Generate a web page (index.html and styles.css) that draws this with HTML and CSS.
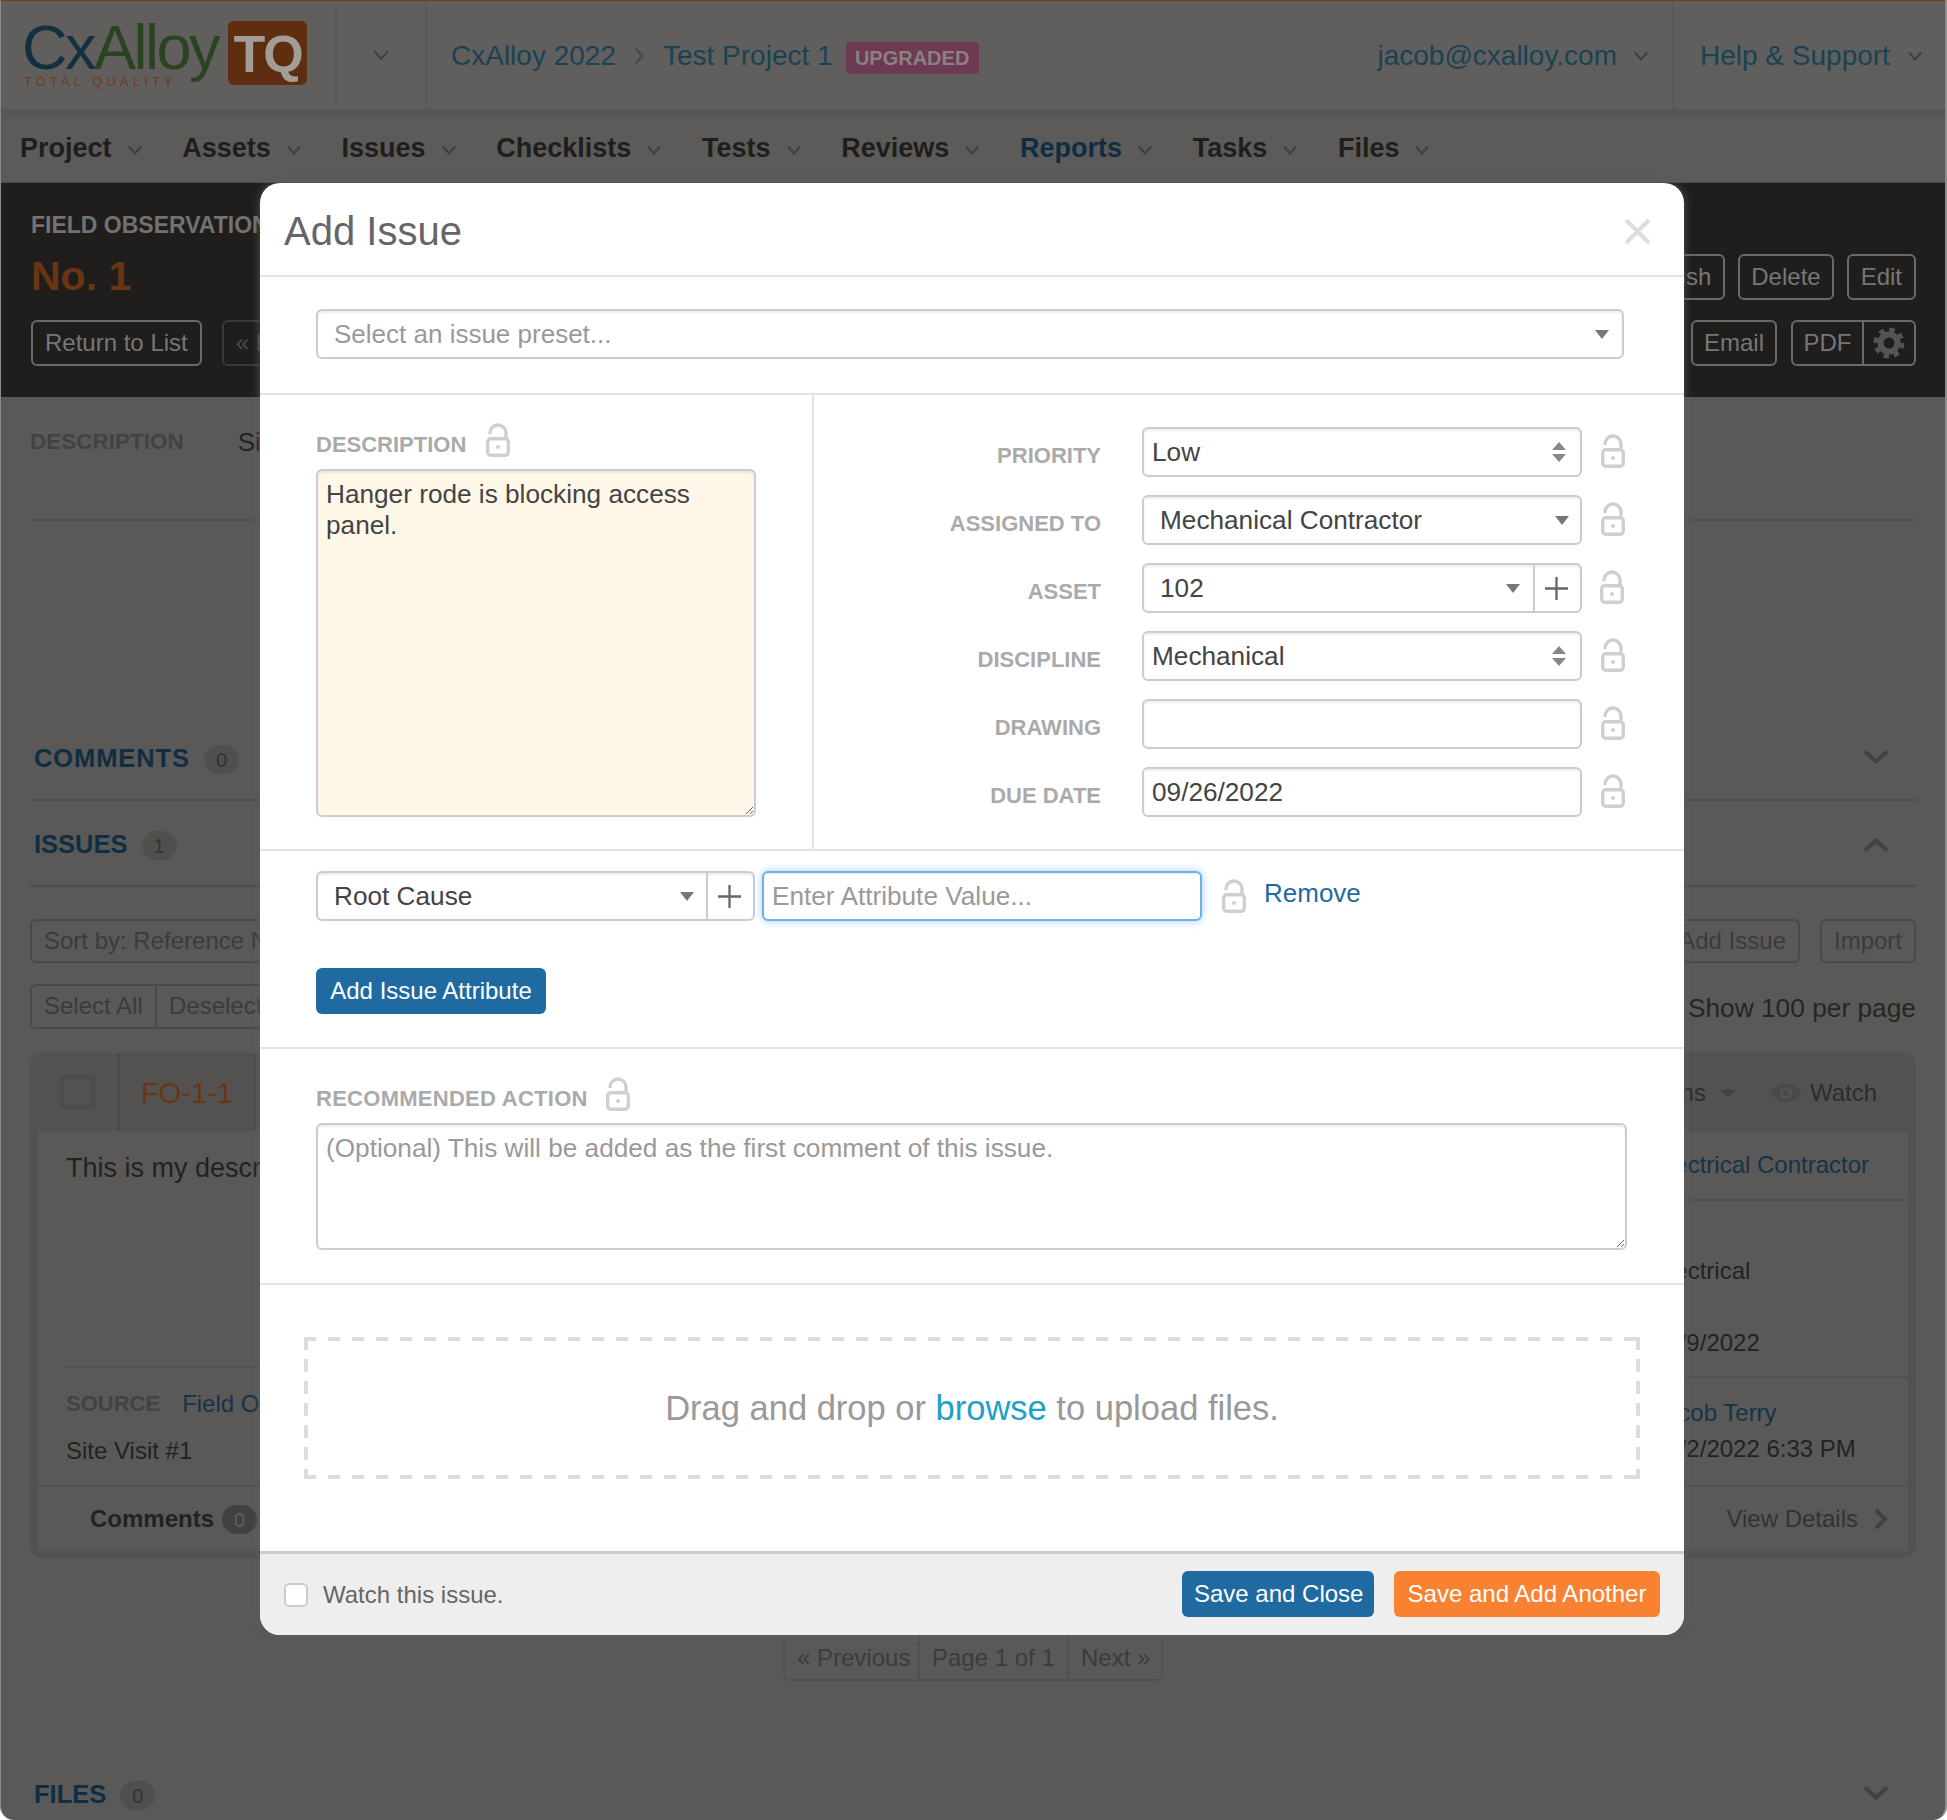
FILE: index.html
```html
<!DOCTYPE html>
<html lang="en">
<head>
<meta charset="utf-8">
<title>Add Issue</title>
<link rel="stylesheet" href="styles.css">
</head>
<body>
<svg class="defs" width="0" height="0" aria-hidden="true">
  <symbol id="lock" viewBox="0 0 24 34">
    <path d="M4 11V10a8 8 0 0 1 16 0v6" fill="none" stroke="currentColor" stroke-width="3.4"/>
    <rect x="1.7" y="15.7" width="20.6" height="16.6" rx="3" fill="none" stroke="currentColor" stroke-width="3.4"/>
    <circle cx="12" cy="24" r="2" fill="currentColor"/>
  </symbol>
  <symbol id="chev" viewBox="0 0 14 10">
    <path d="M1 1.5l6 7 6-7" fill="none" stroke="currentColor" stroke-width="2"/>
  </symbol>
  <symbol id="bigchev" viewBox="0 0 26 16">
    <path d="M2 2.5l11 10 11-10" fill="none" stroke="currentColor" stroke-width="4"/>
  </symbol>
  <symbol id="plus" viewBox="0 0 24 24">
    <path d="M12 0v24M0 12h24" fill="none" stroke="currentColor" stroke-width="2.4"/>
  </symbol>
</svg>
<div class="page">
  <header class="topbar">
    <div class="logo">
      <div class="logo-words">
        <div class="logo-name"><span class="logo-cx">Cx</span><span class="logo-alloy">Alloy</span></div>
        <div class="logo-tag">TOTAL QUALITY</div>
      </div>
      <div class="logo-tq">TQ</div>
    </div>
    <div class="switcher"><svg class="chev-lg"><use href="#chev"/></svg></div>
    <nav class="crumbs">
      <a class="link">CxAlloy 2022</a>
      <svg class="crumb-sep" viewBox="0 0 10 18"><path d="M1.5 1.5l7 7.5-7 7.5" fill="none" stroke="currentColor" stroke-width="2"/></svg>
      <a class="link">Test Project 1</a>
      <span class="badge-up">UPGRADED</span>
    </nav>
    <div class="user"><a class="link">jacob@cxalloy.com</a><svg class="chev"><use href="#chev"/></svg></div>
    <div class="help"><a class="link">Help &amp; Support</a><svg class="chev"><use href="#chev"/></svg></div>
  </header>
  <nav class="mainnav">
    <a class="navitem">Project<svg class="chev"><use href="#chev"/></svg></a>
    <a class="navitem">Assets<svg class="chev"><use href="#chev"/></svg></a>
    <a class="navitem">Issues<svg class="chev"><use href="#chev"/></svg></a>
    <a class="navitem">Checklists<svg class="chev"><use href="#chev"/></svg></a>
    <a class="navitem">Tests<svg class="chev"><use href="#chev"/></svg></a>
    <a class="navitem">Reviews<svg class="chev"><use href="#chev"/></svg></a>
    <a class="navitem navitem-active">Reports<svg class="chev"><use href="#chev"/></svg></a>
    <a class="navitem">Tasks<svg class="chev"><use href="#chev"/></svg></a>
    <a class="navitem">Files<svg class="chev"><use href="#chev"/></svg></a>
  </nav>
  <section class="titlebar">
    <div class="titlebar-row titlebar-top">
      <div>
        <div class="tb-kicker">FIELD OBSERVATIONS</div>
        <div class="tb-no">No. 1</div>
      </div>
      <div class="tb-btns tb-btns-top">
        <span class="tb-btn">Finish</span>
        <span class="tb-btn tb-btn-delete">Delete</span>
        <span class="tb-btn">Edit</span>
      </div>
    </div>
    <div class="titlebar-row">
      <div class="tb-btns">
        <span class="tb-btn">Return to List</span>
        <span class="tb-btn tb-btn-off">« Previous</span>
      </div>
      <div class="tb-btns">
        <span class="tb-btn tb-btn-email">Email</span>
        <span class="tb-group">
          <span class="tb-pdf">PDF</span>
          <span class="tb-gear"><svg viewBox="0 0 32 32" width="32" height="32"><circle cx="16" cy="16" r="8.5" fill="none" stroke="#555452" stroke-width="6"/><circle cx="16" cy="16" r="13" fill="none" stroke="#555452" stroke-width="5" stroke-dasharray="5.2 5"/></svg></span>
        </span>
      </div>
    </div>
  </section>
  <main class="content">
    <div class="desc-row">
      <span class="mini-label">DESCRIPTION</span>
      <span class="desc-val">Site observation</span>
    </div>
    <div class="sect sect-comments">
      <span class="sect-title sect-title-wide">COMMENTS</span><span class="pill">0</span>
      <svg class="bigchev"><use href="#bigchev"/></svg>
    </div>
    <div class="sect">
      <span class="sect-title">ISSUES</span><span class="pill">1</span>
      <svg class="bigchev bigchev-up"><use href="#bigchev"/></svg>
    </div>
    <div class="toolbar">
      <span class="bg-btn">Sort by: Reference Number</span>
      <div class="toolbar-right"><span class="bg-btn">Add Issue</span><span class="bg-btn">Import</span></div>
    </div>
    <div class="toolbar toolbar-2">
      <div class="bg-group"><span class="bg-btn">Select All</span><span class="bg-btn">Deselect All</span></div>
      <span class="show-per">Show 100 per page</span>
    </div>
    <article class="card">
      <div class="card-head">
        <div class="card-check"><span class="bg-check"></span></div>
        <div class="card-ref">FO-1-1</div>
        <div class="card-acts">
          <span class="card-act">Actions<i class="tri-dim"></i></span>
          <span class="card-watch">
            <svg viewBox="0 0 32 18" width="32" height="18"><path d="M0 9c4-5 10-9 16-9s12 4 16 9c-4 5-10 9-16 9S4 14 0 9z" fill="#4a4947"/><circle cx="16" cy="9" r="6" fill="#575654"/><circle cx="16" cy="9" r="3.4" fill="#4a4947"/></svg>
            Watch
          </span>
        </div>
      </div>
      <div class="card-body">
        <div class="card-main">
          <p class="card-text">This is my description of the issue.</p>
          <div class="card-meta">
            <div class="meta-line"><span class="meta-label">SOURCE</span><a class="bg-link">Field Observation No. 1</a></div>
            <div class="meta-val">Site Visit #1</div>
          </div>
        </div>
        <div class="card-side">
          <div class="side-a"><a class="bg-link">Electrical Contractor</a></div>
          <div class="side-b"><div>Electrical</div><div>09/9/2022</div></div>
          <div class="side-c"><a class="bg-link">Jacob Terry</a><div>09/2/2022 6:33 PM</div></div>
        </div>
      </div>
      <div class="card-foot">
        <span class="foot-comments">Comments<span class="pill pill-dark">0</span></span>
        <span class="foot-details">View Details<svg viewBox="0 0 14 22" width="14" height="22"><path d="M2 2l9 9-9 9" fill="none" stroke="#424140" stroke-width="4"/></svg></span>
      </div>
    </article>
    <div class="pager"><span>« Previous</span><span>Page 1 of 1</span><span>Next »</span></div>
    <div class="sect sect-files">
      <span class="sect-title">FILES</span><span class="pill">0</span>
      <svg class="bigchev"><use href="#bigchev"/></svg>
    </div>
  </main>

  <div class="modal" role="dialog" aria-label="Add Issue">
    <div class="m-head">
      <h1 class="m-title">Add Issue</h1>
      <svg class="m-close" viewBox="0 0 27 27" width="27" height="27"><path d="M2 2l23 23M25 2L2 25" fill="none" stroke="#ddd" stroke-width="4"/></svg>
    </div>
    <div class="m-preset">
      <div class="ctl ctl-preset"><span class="ph">Select an issue preset...</span><i class="tri"></i></div>
    </div>
    <div class="m-split">
      <div class="m-left">
        <div class="lab-line lab-line-desc"><span class="lab">DESCRIPTION</span><svg class="lock"><use href="#lock"/></svg></div>
        <textarea class="ta ta-desc">Hanger rode is blocking access panel.</textarea>
      </div>
      <div class="m-right">
        <span class="f-lab">PRIORITY</span>
        <div class="ctl ctl-native"><span>Low</span><i class="stepper"></i></div>
        <svg class="lock"><use href="#lock"/></svg>

        <span class="f-lab">ASSIGNED TO</span>
        <div class="ctl ctl-chosen"><span>Mechanical Contractor</span><i class="tri"></i></div>
        <svg class="lock"><use href="#lock"/></svg>

        <span class="f-lab">ASSET</span>
        <div class="ctl ctl-chosen ctl-add"><span>102</span><i class="tri"></i><b class="addon"><svg class="plus"><use href="#plus"/></svg></b></div>
        <svg class="lock lock-shift"><use href="#lock"/></svg>

        <span class="f-lab">DISCIPLINE</span>
        <div class="ctl ctl-native"><span>Mechanical</span><i class="stepper"></i></div>
        <svg class="lock"><use href="#lock"/></svg>

        <span class="f-lab">DRAWING</span>
        <input class="ctl ctl-input" type="text">
        <svg class="lock"><use href="#lock"/></svg>

        <span class="f-lab">DUE DATE</span>
        <input class="ctl ctl-input" type="text" value="09/26/2022">
        <svg class="lock"><use href="#lock"/></svg>
      </div>
    </div>
    <div class="m-attr">
      <div class="attr-row">
        <div class="ctl ctl-chosen ctl-add ctl-root"><span>Root Cause</span><i class="tri"></i><b class="addon"><svg class="plus"><use href="#plus"/></svg></b></div>
        <input class="ctl ctl-input ctl-focus" type="text" placeholder="Enter Attribute Value...">
        <svg class="lock"><use href="#lock"/></svg>
        <a class="remove">Remove</a>
      </div>
      <button class="btn btn-blue btn-attr" type="button">Add Issue Attribute</button>
    </div>
    <div class="m-rec">
      <div class="lab-line"><span class="lab lab-rec">RECOMMENDED ACTION</span><svg class="lock"><use href="#lock"/></svg></div>
      <textarea class="ta ta-rec" placeholder="(Optional) This will be added as the first comment of this issue."></textarea>
    </div>
    <div class="m-drop">
      <div class="dropzone">Drag and drop or&nbsp;<a class="browse">browse</a>&nbsp;to upload files.</div>
    </div>
    <div class="m-foot">
      <label class="watch"><input class="cb" type="checkbox"><span>Watch this issue.</span></label>
      <div class="m-foot-btns">
        <button class="btn btn-blue btn-close" type="button">Save and Close</button>
        <button class="btn btn-orange" type="button">Save and Add Another</button>
      </div>
    </div>
  </div>
</div>
</body>
</html>
```
FILE: styles.css
```css
* { box-sizing: border-box; }
html, body { margin: 0; padding: 0; background: #fff; }
body { font-family: "Liberation Sans", Arial, sans-serif; color: #222; }
.defs { position: absolute; }
a { text-decoration: none; }
.page {
  position: relative;
  width: 1947px;
  height: 1820px;
  overflow: hidden;
  background: #5a5958;
  border-radius: 0 0 14px 14px;
  border-left: 1px solid #8c8b8a;
  border-right: 2px solid #8c8b8a;
}
.chev { width: 14px; height: 10px; color: #3f3f3d; flex: none; }

/* top bar */
.topbar {
  height: 109px;
  display: flex;
  align-items: stretch;
  background: #605f5d;
  border-top: 1px solid #7a3a14;
}
.logo { width: 334px; padding: 13px 0 0 21px; display: flex; gap: 8px; align-items: flex-start; flex: none; }
.logo-words { width: 198px; }
.logo-name { font-size: 63px; line-height: 66px; letter-spacing: -2.5px; white-space: nowrap; }
.logo-cx { color: #12303f; }
.logo-alloy { color: #2a4320; }
.logo-tag { margin: -5px 0 0 2px; font-size: 12.5px; line-height: 14px; letter-spacing: 4.4px; color: #743815; white-space: nowrap; }
.logo-tq {
  width: 79px; height: 64px; margin-top: 7px; background: #5f2d10; border-radius: 6px;
  color: #a39d97; font-weight: 700; font-size: 52px; line-height: 66px; text-align: center; letter-spacing: -2px;
}
.switcher { width: 92px; flex: none; border-left: 2px solid #5a5957; border-right: 2px solid #5a5957; display: flex; align-items: center; justify-content: center; }
.chev-lg { width: 16px; height: 12px; color: #434241; }
.crumbs { display: flex; align-items: center; padding: 2px 0 0 24px; flex: 1; }
.link { font-size: 28px; color: #194254; white-space: nowrap; }
.crumb-sep { width: 10px; height: 18px; margin: 0 19px 0 18px; color: #4b4a48; }
.badge-up {
  margin: 3px 0 0 13px; width: 133px; height: 32px; background: #6e3a52; border-radius: 4px;
  color: #8a8085; font-weight: 700; font-size: 20px; line-height: 33px; text-align: center;
}
.user { display: flex; align-items: center; gap: 17px; padding: 2px 24px 0 0; }
.help { display: flex; align-items: center; gap: 18px; width: 273px; padding: 2px 0 0 26px; border-left: 2px solid #5a5957; }

/* nav */
.mainnav {
  height: 74px;
  display: flex;
  align-items: center;
  padding: 5px 0 0 19px;
  background: linear-gradient(#565553, #5c5b59 12px);
  border-bottom: 1px solid #4a4948;
}
.navitem { display: flex; align-items: center; gap: 16px; margin-right: 40.7px; font-weight: 700; font-size: 27px; color: #1f1e1c; }
.navitem-active { color: #0f2c44; }
.navitem .chev { margin-top: 4px; }

/* dark title bar */
.titlebar { height: 214px; background: #1f1e1c; padding: 28px 29px 0 30px; }
.titlebar-row { display: flex; justify-content: space-between; align-items: flex-start; }
.titlebar-top { height: 109px; }
.tb-kicker { font-weight: 700; font-size: 23px; line-height: 28px; color: #727272; }
.tb-no { margin-top: 14px; font-weight: 700; font-size: 41px; line-height: 46px; color: #6a3512; }
.tb-btns { display: flex; gap: 13px; }
.tb-btns-top { margin-top: 43px; }
.tb-btn {
  height: 46px; padding: 0 12px; border: 2px solid #6a6a69; border-radius: 6px;
  font-size: 24px; line-height: 42px; color: #777;
}
.tb-btn-delete { padding: 0 11px; }
.tb-btn-email { padding: 0 11px; margin-right: 1px; }
.tb-btn-off { border-color: #3c3b3a; color: #4c4b4a; margin-left: 7px; }
.tb-group { display: flex; height: 46px; border: 2px solid #6a6a69; border-radius: 6px; }
.tb-pdf { width: 71px; text-align: center; font-size: 24px; line-height: 42px; color: #777; border-right: 2px solid #6a6a69; }
.tb-gear { width: 50px; display: flex; align-items: center; justify-content: center; }

/* dim page content */
.content { padding: 0 29px; }
.desc-row { height: 124px; padding-top: 32px; display: flex; gap: 54px; border-bottom: 2px solid #525150; }
.mini-label { font-weight: 700; font-size: 22.5px; line-height: 26px; color: #434241; }
.desc-val { font-size: 26px; line-height: 26px; color: #222; }
.sect { position: relative; height: 86px; padding: 28px 0 0 4px; display: flex; align-items: flex-start; border-bottom: 2px solid #4d4c4b; }
.sect-comments { margin-top: 194px; }
.sect-title { font-weight: 700; font-size: 25.5px; line-height: 30px; color: #0f2e44; }
.sect-title-wide { letter-spacing: .9px; }
.pill { margin: 2px 0 0 14px; width: 35px; height: 29px; border-radius: 15px; background: #504f4e; color: #333; font-size: 20px; line-height: 31px; text-align: center; }
.bigchev { position: absolute; right: 27px; top: 36px; width: 26px; height: 16px; color: #434241; }
.sect-comments .bigchev { top: 34px; }
.bigchev-up { transform: scaleY(-1); }
.toolbar { margin-top: 32px; display: flex; justify-content: space-between; align-items: center; }
.toolbar-2 { margin-top: 21px; }
.toolbar-right { display: flex; gap: 20px; }
.bg-btn { display: block; height: 44px; padding: 0 12px; border: 2px solid #4a4948; border-radius: 6px; font-size: 24px; line-height: 40px; color: #3c3b3a; white-space: nowrap; }
.toolbar-2 .bg-btn { height: 45px; }
.bg-group { display: flex; }
.bg-group .bg-btn:first-child { border-radius: 6px 0 0 6px; width: 127px; }
.bg-group .bg-btn:last-child { border-radius: 0 6px 6px 0; border-left: 0; }
.show-per { font-size: 26.3px; line-height: 34px; margin-top: 2px; color: #262524; }

.card { margin-top: 24px; height: 505px; background: #545251; border-radius: 12px; padding: 0 8px 7px; display: flex; flex-direction: column; }
.card-head { height: 78px; display: flex; align-items: center; margin: 0 -8px; padding-right: 39px; }
.card-check { width: 90px; height: 78px; border-right: 2px solid #4a4948; display: flex; align-items: center; justify-content: center; }
.bg-check { width: 35px; height: 34px; border: 4px solid #4d4c4b; margin-left: 6px; }
.card-ref { width: 136px; height: 78px; padding-left: 21px; border-right: 2px solid #4a4948; font-size: 29px; line-height: 80px; color: #6a3513; }
.card-acts { margin-left: auto; padding-top: 2px; display: flex; align-items: center; gap: 34px; font-size: 24px; color: #2d2c2b; }
.card-act { display: flex; align-items: center; gap: 14px; }
.tri-dim { width: 0; height: 0; border: 8px solid transparent; border-top: 7px solid #434241; border-bottom: 0; }
.card-watch { display: flex; align-items: center; gap: 8px; }
.card-body { flex: 1; display: flex; background: #5a5958; }
.card-main { width: 1615px; padding-left: 28px; display: flex; flex-direction: column; }
.card-text { margin: 20px 0 0; height: 215px; font-size: 27px; line-height: 34px; color: #222; white-space: nowrap; }
.card-meta { border-top: 2px solid #525150; padding-top: 22px; font-size: 24px; color: #222; }
.meta-line { display: flex; gap: 22px; line-height: 28px; }
.meta-label { font-weight: 700; font-size: 22px; color: #434241; }
.bg-link { color: #133349; font-size: 24px; }
.meta-val { margin-top: 19px; line-height: 28px; }
.card-side { flex: 1; font-size: 24px; color: #222; line-height: 28px; }
.side-a { height: 70px; padding-top: 20px; border-bottom: 2px solid #525150; }
.side-b { height: 177px; padding-top: 56px; border-bottom: 2px solid #525150; display: flex; flex-direction: column; gap: 44px; }
.side-c { padding-top: 21px; display: flex; flex-direction: column; gap: 8px; }
.card-foot { height: 66px; background: #5a5958; border-top: 2px solid #525150; display: flex; align-items: center; justify-content: space-between; padding: 0 20px 0 52px; font-size: 24px; }
.foot-comments { display: flex; font-weight: 700; color: #222; align-items: center; gap: 8px; }
.pill-dark { margin: 0; background: #424140; color: #5e5e5d; font-weight: 400; }
.foot-details { display: flex; align-items: center; gap: 16px; color: #333; }

.pager { margin: 58px 0 0 753px; width: 380px; height: 65px; display: flex; border: 2px solid #525150; border-radius: 6px; font-size: 24px; color: #3c3b3a; }
.pager span { padding: 19px 0 0 12px; line-height: 42px; border-right: 2px solid #525150; }
.pager span:nth-child(1) { width: 135px; }
.pager span:nth-child(2) { width: 149px; }
.pager span:nth-child(3) { flex: 1; border-right: 0; }
.sect-files { border-bottom: 0; margin-top: 72px; padding-top: 26px; }
.sect-files .bigchev { top: 32px; }

/* modal */
.modal {
  position: absolute;
  left: 259px;
  top: 183px;
  width: 1424px;
  background: #fff;
  border-radius: 20px;
  box-shadow: 0 0 10px rgba(96, 96, 96, .8);
  color: #555;
  overflow: hidden;
}
.m-head { height: 94px; padding: 4px 33px 0 24px; display: flex; align-items: center; justify-content: space-between; border-bottom: 2px solid #e3e3e3; }
.m-title { margin: 0; font-weight: 400; font-size: 40px; line-height: 48px; color: #666; }
.m-close { flex: none; }
.m-preset { height: 118px; padding: 32px 0 0 56px; border-bottom: 2px solid #e3e3e3; }
.ctl {
  display: flex; align-items: center; height: 50px; background: #fff;
  border: 2px solid #ccc; border-radius: 6px; box-shadow: inset 0 2px 2px rgba(0, 0, 0, .075);
  font-family: inherit; font-size: 26.2px; color: #444; position: relative; margin: 0;
}
.ctl-preset { width: 1308px; padding-left: 16px; font-size: 26px; }
.ph { color: #999; }
.tri { width: 0; height: 0; border-style: solid; border-width: 9px 7.5px 0; border-color: #777 transparent transparent; position: absolute; }
.ctl-preset .tri { right: 13px; top: 19px; }
.ctl-chosen { padding-left: 16px; }
.ctl-chosen .tri { right: 11px; top: 19px; }
.ctl-native { padding-left: 8px; }
.ctl-input { padding: 0 8px; outline: none; }
.stepper { position: absolute; right: 14px; top: 13px; width: 14px; height: 20px; }
.stepper::before, .stepper::after { content: ""; position: absolute; left: 0; width: 0; height: 0; border-left: 7px solid transparent; border-right: 7px solid transparent; }
.stepper::before { top: 0; border-bottom: 8px solid #888; }
.stepper::after { bottom: 0; border-top: 8px solid #888; }
.ctl-add .tri { right: 60px; }
.addon { position: absolute; right: 0; top: 0; bottom: 0; width: 47px; padding-right: 3px; border-left: 2px solid #ccc; display: flex; align-items: center; justify-content: center; }
.plus { width: 23px; height: 23px; color: #666; flex: none; }
.lock { width: 24px; height: 34px; color: #cfcfcf; flex: none; }
.lock-shift { margin-left: -1px; }
.m-split { display: flex; height: 456px; border-bottom: 2px solid #e3e3e3; }
.m-left { width: 554px; padding: 28px 0 0 56px; border-right: 2px solid #e3e3e3; flex: none; }
.lab-line { display: flex; align-items: center; gap: 18px; height: 34px; margin-bottom: 12px; }
.lab-line-desc { gap: 20px; }
.lab { font-weight: 700; font-size: 22px; line-height: 26px; color: #aaa; padding-top: 10px; }
.lab-rec { letter-spacing: .27px; }
.ta {
  display: block; border: 2px solid #ccc; border-radius: 6px; padding: 8px;
  font-family: inherit; font-size: 26.2px; line-height: 30.6px; color: #444; outline: none;
  box-shadow: inset 0 2px 2px rgba(0, 0, 0, .075);
}
.ta::placeholder, .ctl-input::placeholder { color: #999; opacity: 1; }
.ta-desc { width: 440px; height: 348px; background: #fff8e9; resize: both; }
.m-right {
  flex: 1; padding-top: 32px;
  display: grid; grid-template-columns: 328px 459px 24px; grid-auto-rows: 50px; row-gap: 18px; align-items: center;
}
.m-right .ctl { width: 440px; }
.m-right .lock { margin-top: -2px; }
.f-lab { text-align: right; padding: 7px 41px 0 0; font-weight: 700; font-size: 22px; line-height: 26px; color: #aaa; }
.m-attr { height: 198px; padding: 20px 0 0 56px; border-bottom: 2px solid #e3e3e3; }
.attr-row { display: flex; align-items: center; }
.ctl-root { width: 439px; }
.ctl-root .tri { right: 59px; }
.ctl-focus { width: 440px; margin-left: 7px; padding-left: 8px; border-color: #6cb2ea; box-shadow: inset 0 1px 1px rgba(0, 0, 0, .075), 0 0 8px rgba(102, 175, 233, .6); }
.attr-row .lock { margin-left: 20px; }
.remove { margin: -6px 0 0 18px; font-size: 26px; color: #1f6aa0; }
.btn { display: block; height: 46px; padding: 0 12px; border: 0; border-radius: 6px; font-family: inherit; font-size: 24px; color: #fff; white-space: nowrap; }
.btn-blue { background: #1f6aa0; }
.btn-orange { background: #f98232; width: 266px; }
.btn-close { width: 192px; }
.btn-attr { margin-top: 47px; width: 230px; }
.m-rec { height: 236px; padding: 28px 0 0 56px; border-bottom: 2px solid #e3e3e3; }
.ta-rec { width: 1311px; height: 127px; resize: both; }
.m-drop { height: 266px; padding: 52px 0 0 44px; }
.dropzone {
  width: 1336px; height: 142px; display: flex; align-items: center; justify-content: center;
  font-size: 34.5px; color: #999;
  background:
    repeating-linear-gradient(90deg, #ddd 0 12px, transparent 12px 24px) top left / 100% 4px no-repeat,
    repeating-linear-gradient(90deg, #ddd 0 12px, transparent 12px 24px) bottom left / 100% 4px no-repeat,
    repeating-linear-gradient(180deg, #ddd 0 13px, transparent 13px 22px) top left / 4px 100% no-repeat,
    repeating-linear-gradient(180deg, #ddd 0 13px, transparent 13px 22px) top right / 4px 100% no-repeat;
}
.browse { color: #20a0c8; }
.m-foot { height: 84px; background: #eee; border-top: 3px solid #ccc; padding: 17px 24px 0 24px; display: flex; justify-content: space-between; }
.watch { display: flex; align-items: center; gap: 15px; height: 46px; font-size: 24px; color: #666; }
.watch span { margin-top: 2px; }
.cb { appearance: none; -webkit-appearance: none; margin: 2px 0 0; width: 24px; height: 24px; background: #fff; border: 2px solid #ccc; border-radius: 5px; }
.m-foot-btns { display: flex; gap: 20px; }
```
